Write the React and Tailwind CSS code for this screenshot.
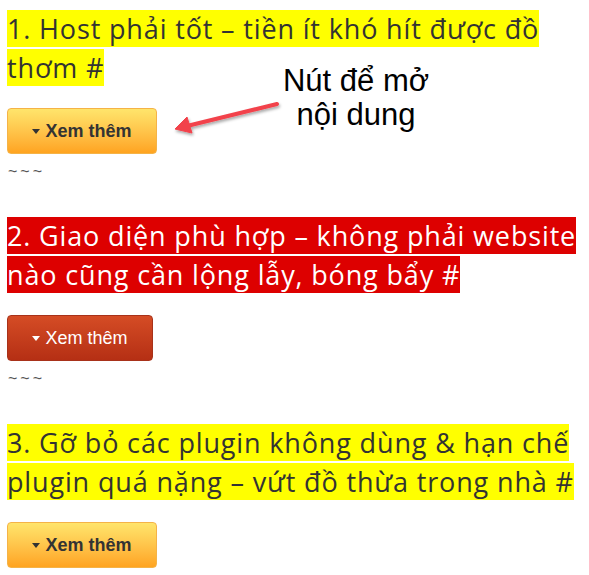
import React from 'react'

const sections = [
  {
    lines: ['1. Host phải tốt – tiền ít khó hít được đồ', 'thơm #'],
    tone: 'yellow',
  },
  {
    lines: ['2. Giao diện phù hợp – không phải website', 'nào cũng cần lộng lẫy, bóng bẩy #'],
    tone: 'red',
  },
  {
    lines: ['3. Gỡ bỏ các plugin không dùng & hạn chế', 'plugin quá nặng – vứt đồ thừa trong nhà #'],
    tone: 'yellow',
  },
]

function Caret() {
  return <span className="mr-[5px] inline-block h-0 w-0 border-x-[4px] border-t-[5px] border-x-transparent border-t-current align-middle" />
}

function MoreButton({ tone }) {
  const cls =
    tone === 'red'
      ? 'w-[146px] border-[#a8321a] bg-gradient-to-b from-[#d54c25] to-[#b52f14] font-normal text-white'
      : 'w-[150px] border-[#f5b347] bg-gradient-to-b from-[#ffe56b] to-[#ffa41f] font-bold text-[#333]'
  return (
    <button
      className={`flex h-[46px] items-center justify-center rounded-[4px] border pt-px text-[18px] ${cls}`}
      style={{ fontFamily: '"Liberation Sans", Arial, sans-serif' }}
    >
      <Caret />
      Xem thêm
    </button>
  )
}

function Heading({ lines, tone }) {
  const hl = tone === 'red' ? 'bg-[#dd0000] text-white' : 'bg-[#ffff00] text-[#333]'
  return (
    <h2
      className="text-[27px] leading-[39px] font-normal tracking-[0.85px] whitespace-nowrap"
      style={{ fontFamily: '"Open Sans", "Noto Sans", sans-serif' }}
    >
      {lines.map((l, i) => (
        <React.Fragment key={i}>
          <span className={`${hl} box-decoration-clone`}>{l}</span>
          {i < lines.length - 1 && <br />}
        </React.Fragment>
      ))}
    </h2>
  )
}

export default function App() {
  return (
    <div className="relative h-[575px] w-[589px] overflow-hidden bg-white pl-[7px] pt-[9px]">
      {sections.map((s, i) => (
        <section key={i} className="h-[207px]">
          <Heading lines={s.lines} tone={s.tone} />
          <div className="mt-[21px]">
            <MoreButton tone={s.tone} />
          </div>
          {i < sections.length - 1 && (
            <p
              className="mt-[8px] pl-px text-[16px] leading-[20px] tracking-[3px] text-[#555]"
              style={{ fontFamily: '"Liberation Sans", Arial, sans-serif' }}
            >
              ~~~
            </p>
          )}
        </section>
      ))}

      {/* callout pointing at the first button */}
      <div
        className="absolute left-[256px] top-[64px] w-[200px] text-center text-[31px] leading-[34px] text-black"
        style={{ fontFamily: '"Liberation Sans", Arial, sans-serif' }}
      >
        Nút để mở
        <br />
        nội dung
      </div>
      <svg className="absolute left-[165px] top-[95px]" width="125" height="45" viewBox="0 0 125 45">
        <defs>
          <filter id="sh" x="-20%" y="-50%" width="140%" height="200%">
            <feDropShadow dx="1" dy="2" stdDeviation="1.5" floodColor="#000" floodOpacity="0.35" />
          </filter>
        </defs>
        <g filter="url(#sh)" fill="#f2434c" stroke="#f2434c">
          <line x1="112" y1="9" x2="22" y2="31" strokeWidth="4" strokeLinecap="round" />
          <path d="M10 34 L22 22 L27 38 Z" strokeWidth="1" strokeLinejoin="round" />
        </g>
      </svg>
    </div>
  )
}
